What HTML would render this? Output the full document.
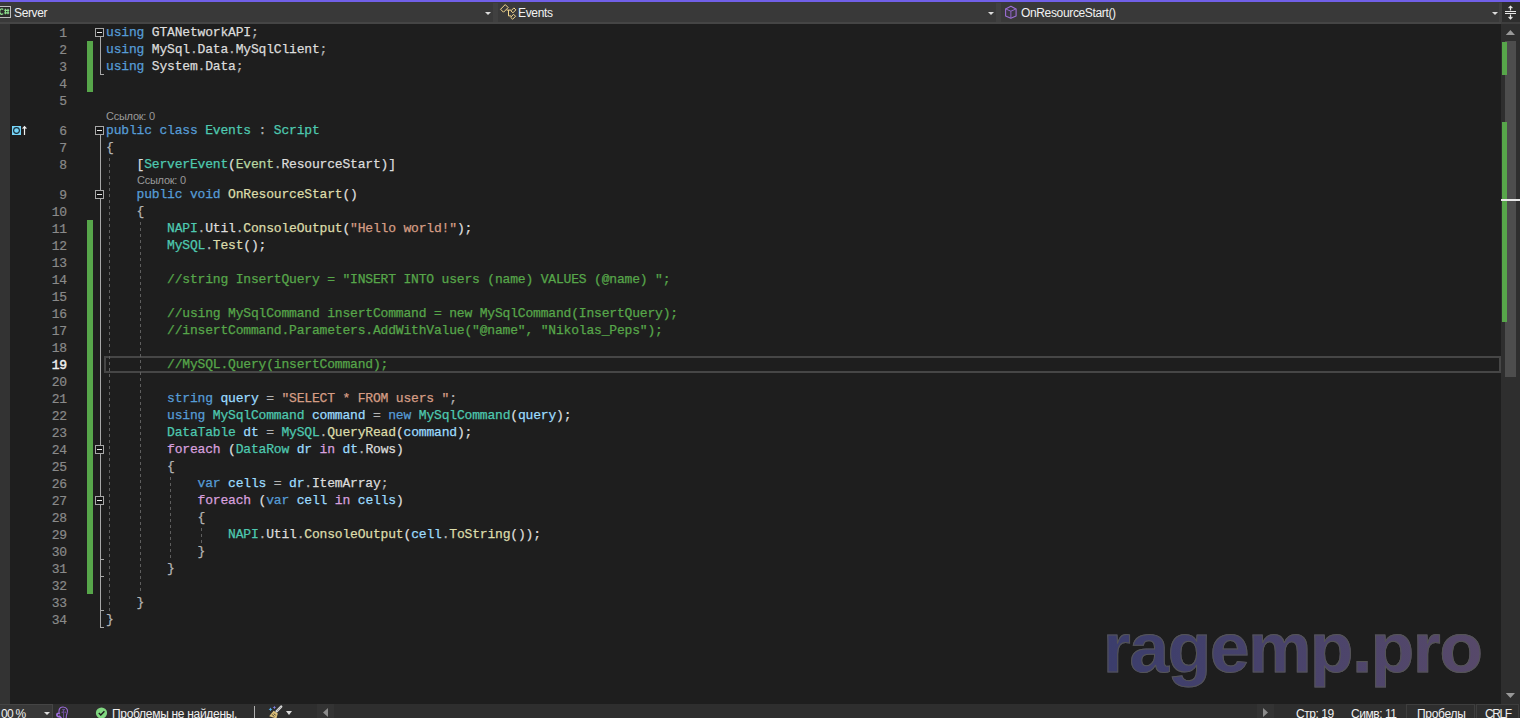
<!DOCTYPE html>
<html><head><meta charset="utf-8">
<style>
html,body{margin:0;padding:0}
body{width:1520px;height:718px;overflow:hidden;background:#1e1e1e;position:relative;font-family:"Liberation Sans",sans-serif}
.a{position:absolute}
svg{position:absolute;overflow:visible}
#topline{left:0;top:0;width:1520px;height:2px;background:#7160e8}
#nav{left:0;top:2px;width:1520px;height:20px;background:#393939}
#navb{left:0;top:22px;width:1520px;height:2px;background:#454545}
.sep{top:3px;width:5px;height:19px;background:#404040}
.navt{top:6px;font-size:12px;color:#f2f2f2;line-height:15px;white-space:nowrap;letter-spacing:-0.35px}
.dd{position:absolute;width:0;height:0;border-left:3px solid transparent;border-right:3px solid transparent;border-top:3px solid #dcdcdc}
#leftstrip{left:0;top:24px;width:10px;height:680px;background:#333333}
.ln{position:absolute;left:27px;width:40px;text-align:right;font-family:"Liberation Mono",monospace;font-size:13px;letter-spacing:-0.175px;line-height:17px;color:#8a8a8a;padding-top:1px;-webkit-text-stroke:0.2px currentColor}
.ln.cur{color:#f0f0f0;-webkit-text-stroke:0.45px currentColor}
.cl{position:absolute;left:106px;white-space:pre;font-family:"Liberation Mono",monospace;font-size:13px;letter-spacing:-0.175px;line-height:17px;-webkit-text-stroke:0.25px currentColor}
.lens{position:absolute;font-size:11px;color:#9a9a9a;line-height:13px;white-space:nowrap;letter-spacing:-0.25px}
.ig{position:absolute;width:1px;background:repeating-linear-gradient(to bottom,#5e5e5e 0,#5e5e5e 3px,transparent 3px,transparent 6px)}
.cb{position:absolute;left:95px;width:7px;height:7px;border:1px solid #a8a8a8;background:#161616}
.cb i{position:absolute;left:1px;top:3px;width:5px;height:1px;background:#e8e8e8}
.tk{position:absolute;left:100px;width:4px;height:1px;background:#a8a8a8}
.gb{position:absolute;left:87px;width:6px;background:#57a64a}
#curline{left:104px;top:356px;width:1393px;height:13px;border:2px solid #464646}
#vscroll{left:1501px;top:24px;width:19px;height:680px;background:#2e2e2e}
#thumb{left:1505px;top:41px;width:11px;height:336px;background:#4d4d4d}
#status{left:0;top:704px;width:1520px;height:14px;background:#2e2e2e}
.st{position:absolute;top:707px;font-size:12px;color:#f0f0f0;line-height:15px;white-space:nowrap;letter-spacing:-0.3px}
#wm{left:1103px;top:606px;font-family:"Liberation Sans",sans-serif;font-weight:bold;font-size:71px;line-height:84px;letter-spacing:-1.2px;white-space:nowrap;background:linear-gradient(to right,#3b3d6c,#57496a);-webkit-background-clip:text;background-clip:text;color:transparent;-webkit-text-stroke:1px #555}
</style></head><body>
<div id="topline" class="a"></div>
<div id="nav" class="a"></div>
<div id="navb" class="a"></div>
<!-- nav combos -->
<div class="a" style="left:0;top:6px;width:11px;height:12px;border:1px solid #bdbdbd;box-sizing:border-box;border-left:none;background:#2c2c2c"></div>
<svg style="left:0;top:0" width="12" height="24" viewBox="0 0 12 24">
 <path d="M3.2 9.5 C2.2 8.4 -0.3 8.7 -0.3 11.6 C-0.3 14.5 2.2 14.8 3.2 13.7" fill="none" stroke="#8ee08e" stroke-width="1.2"/>
 <path d="M5.4 8.8V14.3M8 8.8V14.3M4.3 10.3H9.2M4.3 12.8H9.2" stroke="#8ee08e" stroke-width="1.15"/>
</svg>
<div class="a navt" style="left:14px">Server</div>
<div class="dd" style="left:485px;top:12px"></div>
<div class="a sep" style="left:493px"></div>
<svg style="left:498px;top:2px" width="20" height="20" viewBox="0 0 20 20">
 <g fill="none" stroke="#f5d88e" stroke-width="1" stroke-linejoin="miter">
 <path d="M10.17 5.55 L7.21 2.59 L2.55 7.25 L5.51 10.21 Z"/>
 <path d="M14.91 10.83 L12.93 8.85 L15.89 5.89 L17.87 7.87 Z"/>
 <path d="M14.61 17.23 L12.63 15.25 L15.59 12.29 L17.57 14.27 Z"/>
 <path d="M8.6 8.1 H12.9 M10.5 8.1 V13.9 H13.0"/>
 </g>
</svg>
<div class="a navt" style="left:518px">Events</div>
<div class="dd" style="left:988px;top:12px"></div>
<div class="a sep" style="left:996px"></div>
<svg style="left:1000px;top:2px" width="22" height="20" viewBox="0 0 22 20">
 <path d="M10.86 4.2 L16.1 6.9 V14 L10.86 16.2 L5.6 14 V6.9 Z" fill="#3c3742" stroke="#9d6fd6" stroke-width="1.1" stroke-linejoin="round"/>
 <path d="M5.6 6.9 L10.86 9.2 L16.1 6.9 M10.86 9.2 V16.2" fill="none" stroke="#9068c8" stroke-width="1"/>
</svg>
<div class="a navt" style="left:1021px">OnResourceStart()</div>
<div class="dd" style="left:1492px;top:12px"></div>
<div class="a" style="left:1499px;top:3px;width:3px;height:19px;background:#404040"></div>
<div class="a" style="left:1502px;top:2px;width:18px;height:20px;background:#2d2d2d"></div>
<div class="a" style="left:1501px;top:22px;width:19px;height:2px;background:#3e3e3e"></div>
<svg style="left:1500px;top:2px" width="20" height="22" viewBox="0 0 20 22">
 <g stroke="#e6e6e6" stroke-width="1.2" fill="none">
 <path d="M5 9.5H16M5 11.5H16"/>
 <path d="M10.5 4.3V8.6M8.6 6.2L10.5 4.3L12.4 6.2"/>
 <path d="M10.5 12.4V16.8M8.6 14.9L10.5 16.8L12.4 14.9"/>
 </g>
</svg>

<div id="leftstrip" class="a"></div>
<div id="curline" class="a"></div>
<div class="gb" style="top:41px;height:51px"></div>
<div class="gb" style="top:220px;height:374px"></div>
<div class="ig" style="left:109px;top:158px;height:453px"></div>
<div class="ig" style="left:140px;top:222px;height:372px"></div>
<div class="ig" style="left:170px;top:477px;height:83px"></div>
<div class="ig" style="left:201px;top:528px;height:15px"></div>
<div class="a" style="left:100px;width:1px;background:#a8a8a8;top:37px;height:37px"></div>
<div class="a" style="left:100px;width:1px;background:#a8a8a8;top:135px;height:492px"></div>
<div class="cb" style="top:28px"><i></i></div>
<div class="cb" style="top:126px"><i></i></div>
<div class="cb" style="top:190px"><i></i></div>
<div class="cb" style="top:445px"><i></i></div>
<div class="cb" style="top:496px"><i></i></div>
<div class="tk" style="top:74px"></div>
<div class="tk" style="top:559px"></div>
<div class="tk" style="top:576px"></div>
<div class="tk" style="top:610px"></div>
<div class="tk" style="top:627px"></div>
<svg style="left:10px;top:122px" width="20" height="17" viewBox="0 0 20 17">
 <rect x="2" y="4" width="9" height="9" fill="#75d4f8"/>
 <circle cx="6.5" cy="8.5" r="2.9" fill="none" stroke="#1a2a33" stroke-width="1.1"/>
 <path d="M14.5 13V4.6M12.6 6.6L14.5 4.6L16.4 6.6" stroke="#f0f0f0" stroke-width="1.2" fill="none"/>
</svg>
<div class="lens" style="left:106px;top:110px">Ссылок: 0</div>
<div class="lens" style="left:137px;top:174px">Ссылок: 0</div>
<div class="ln" style="top:24px">1</div>
<div class="cl" style="top:24px"><span style="color:#569CD6">using</span><span style="color:#DCDCDC"> GTANetworkAPI</span><span style="color:#B4B4B4">;</span></div>
<div class="ln" style="top:41px">2</div>
<div class="cl" style="top:41px"><span style="color:#569CD6">using</span><span style="color:#DCDCDC"> MySql</span><span style="color:#B4B4B4">.</span><span style="color:#DCDCDC">Data</span><span style="color:#B4B4B4">.</span><span style="color:#DCDCDC">MySqlClient</span><span style="color:#B4B4B4">;</span></div>
<div class="ln" style="top:58px">3</div>
<div class="cl" style="top:58px"><span style="color:#569CD6">using</span><span style="color:#DCDCDC"> System</span><span style="color:#B4B4B4">.</span><span style="color:#DCDCDC">Data</span><span style="color:#B4B4B4">;</span></div>
<div class="ln" style="top:75px">4</div>
<div class="ln" style="top:92px">5</div>
<div class="ln" style="top:122px">6</div>
<div class="cl" style="top:122px"><span style="color:#569CD6">public class</span><span style="color:#DCDCDC"> </span><span style="color:#4EC9B0">Events</span><span style="color:#B4B4B4"> : </span><span style="color:#4EC9B0">Script</span></div>
<div class="ln" style="top:139px">7</div>
<div class="cl" style="top:139px"><span style="color:#B4B4B4">{</span></div>
<div class="ln" style="top:156px">8</div>
<div class="cl" style="top:156px"><span style="color:#DCDCDC">    [</span><span style="color:#4EC9B0">ServerEvent</span><span style="color:#DCDCDC">(</span><span style="color:#B8D7A3">Event</span><span style="color:#B4B4B4">.</span><span style="color:#DCDCDC">ResourceStart</span><span style="color:#DCDCDC">)]</span></div>
<div class="ln" style="top:186px">9</div>
<div class="cl" style="top:186px"><span style="color:#569CD6">    public void</span><span style="color:#DCDCDC"> </span><span style="color:#DCDCAA">OnResourceStart</span><span style="color:#DCDCDC">()</span></div>
<div class="ln" style="top:203px">10</div>
<div class="cl" style="top:203px"><span style="color:#B4B4B4">    {</span></div>
<div class="ln" style="top:220px">11</div>
<div class="cl" style="top:220px"><span style="color:#4EC9B0">        NAPI</span><span style="color:#B4B4B4">.</span><span style="color:#DCDCDC">Util</span><span style="color:#B4B4B4">.</span><span style="color:#DCDCAA">ConsoleOutput</span><span style="color:#DCDCDC">(</span><span style="color:#D69D85">&quot;Hello world!&quot;</span><span style="color:#DCDCDC">);</span></div>
<div class="ln" style="top:237px">12</div>
<div class="cl" style="top:237px"><span style="color:#4EC9B0">        MySQL</span><span style="color:#B4B4B4">.</span><span style="color:#DCDCAA">Test</span><span style="color:#DCDCDC">();</span></div>
<div class="ln" style="top:254px">13</div>
<div class="ln" style="top:271px">14</div>
<div class="cl" style="top:271px"><span style="color:#57A64A">        //string InsertQuery = &quot;INSERT INTO users (name) VALUES (@name) &quot;;</span></div>
<div class="ln" style="top:288px">15</div>
<div class="ln" style="top:305px">16</div>
<div class="cl" style="top:305px"><span style="color:#57A64A">        //using MySqlCommand insertCommand = new MySqlCommand(InsertQuery);</span></div>
<div class="ln" style="top:322px">17</div>
<div class="cl" style="top:322px"><span style="color:#57A64A">        //insertCommand.Parameters.AddWithValue(&quot;@name&quot;, &quot;Nikolas_Peps&quot;);</span></div>
<div class="ln" style="top:339px">18</div>
<div class="ln cur" style="top:356px">19</div>
<div class="cl" style="top:356px"><span style="color:#57A64A">        //MySQL.Query(insertCommand);</span></div>
<div class="ln" style="top:373px">20</div>
<div class="ln" style="top:390px">21</div>
<div class="cl" style="top:390px"><span style="color:#569CD6">        string</span><span style="color:#DCDCDC"> </span><span style="color:#9CDCFE">query</span><span style="color:#B4B4B4"> = </span><span style="color:#D69D85">&quot;SELECT * FROM users &quot;</span><span style="color:#B4B4B4">;</span></div>
<div class="ln" style="top:407px">22</div>
<div class="cl" style="top:407px"><span style="color:#569CD6">        using</span><span style="color:#DCDCDC"> </span><span style="color:#4EC9B0">MySqlCommand</span><span style="color:#DCDCDC"> </span><span style="color:#9CDCFE">command</span><span style="color:#B4B4B4"> = </span><span style="color:#569CD6">new</span><span style="color:#DCDCDC"> </span><span style="color:#4EC9B0">MySqlCommand</span><span style="color:#DCDCDC">(</span><span style="color:#9CDCFE">query</span><span style="color:#DCDCDC">);</span></div>
<div class="ln" style="top:424px">23</div>
<div class="cl" style="top:424px"><span style="color:#4EC9B0">        DataTable</span><span style="color:#DCDCDC"> </span><span style="color:#9CDCFE">dt</span><span style="color:#B4B4B4"> = </span><span style="color:#4EC9B0">MySQL</span><span style="color:#B4B4B4">.</span><span style="color:#DCDCAA">QueryRead</span><span style="color:#DCDCDC">(</span><span style="color:#9CDCFE">command</span><span style="color:#DCDCDC">);</span></div>
<div class="ln" style="top:441px">24</div>
<div class="cl" style="top:441px"><span style="color:#D8A0DF">        foreach</span><span style="color:#DCDCDC"> (</span><span style="color:#4EC9B0">DataRow</span><span style="color:#DCDCDC"> </span><span style="color:#9CDCFE">dr</span><span style="color:#DCDCDC"> </span><span style="color:#D8A0DF">in</span><span style="color:#DCDCDC"> </span><span style="color:#9CDCFE">dt</span><span style="color:#B4B4B4">.</span><span style="color:#DCDCDC">Rows)</span></div>
<div class="ln" style="top:458px">25</div>
<div class="cl" style="top:458px"><span style="color:#B4B4B4">        {</span></div>
<div class="ln" style="top:475px">26</div>
<div class="cl" style="top:475px"><span style="color:#569CD6">            var</span><span style="color:#DCDCDC"> </span><span style="color:#9CDCFE">cells</span><span style="color:#B4B4B4"> = </span><span style="color:#9CDCFE">dr</span><span style="color:#B4B4B4">.</span><span style="color:#DCDCDC">ItemArray</span><span style="color:#B4B4B4">;</span></div>
<div class="ln" style="top:492px">27</div>
<div class="cl" style="top:492px"><span style="color:#D8A0DF">            foreach</span><span style="color:#DCDCDC"> (</span><span style="color:#569CD6">var</span><span style="color:#DCDCDC"> </span><span style="color:#9CDCFE">cell</span><span style="color:#DCDCDC"> </span><span style="color:#D8A0DF">in</span><span style="color:#DCDCDC"> </span><span style="color:#9CDCFE">cells</span><span style="color:#DCDCDC">)</span></div>
<div class="ln" style="top:509px">28</div>
<div class="cl" style="top:509px"><span style="color:#B4B4B4">            {</span></div>
<div class="ln" style="top:526px">29</div>
<div class="cl" style="top:526px"><span style="color:#4EC9B0">                NAPI</span><span style="color:#B4B4B4">.</span><span style="color:#DCDCDC">Util</span><span style="color:#B4B4B4">.</span><span style="color:#DCDCAA">ConsoleOutput</span><span style="color:#DCDCDC">(</span><span style="color:#9CDCFE">cell</span><span style="color:#B4B4B4">.</span><span style="color:#DCDCAA">ToString</span><span style="color:#DCDCDC">());</span></div>
<div class="ln" style="top:543px">30</div>
<div class="cl" style="top:543px"><span style="color:#B4B4B4">            }</span></div>
<div class="ln" style="top:560px">31</div>
<div class="cl" style="top:560px"><span style="color:#B4B4B4">        }</span></div>
<div class="ln" style="top:577px">32</div>
<div class="ln" style="top:594px">33</div>
<div class="cl" style="top:594px"><span style="color:#B4B4B4">    }</span></div>
<div class="ln" style="top:611px">34</div>
<div class="cl" style="top:611px"><span style="color:#B4B4B4">}</span></div>

<div id="wm" class="a">ragemp.pro</div>

<div id="vscroll" class="a"></div>
<div id="thumb" class="a"></div>
<div class="a" style="left:1502px;top:42px;width:5px;height:33px;background:#57a64a"></div>
<div class="a" style="left:1502px;top:122px;width:5px;height:200px;background:#57a64a"></div>
<div class="a" style="left:1501px;top:199px;width:19px;height:2px;background:#e8e8e8"></div>
<svg style="left:1500px;top:24px" width="20" height="680" viewBox="0 0 20 680">
 <path d="M5.8 11H15L10.4 6Z" fill="#999"/>
 <path d="M5.8 669H15L10.4 674Z" fill="#999"/>
</svg>

<div id="status" class="a"></div>
<div class="a" style="left:0;top:704px;width:53px;height:14px;background:#383838;border-top:1px solid #454545;border-right:1px solid #454545;box-sizing:border-box"></div>
<div class="st" style="left:1px;letter-spacing:-0.7px">00 %</div>
<div class="dd" style="left:44px;top:712px"></div>
<svg style="left:54px;top:704px" width="16" height="14" viewBox="0 0 16 14">
 <path d="M5.8 10.2 C4.2 8 4.6 3 9 3 C13.2 3 14.3 6.9 13 9.4 C12.4 10.5 12.2 11.6 12.2 14" fill="none" stroke="#9a6ad6" stroke-width="1.1"/>
 <path d="M8.2 5.6 H11 M9.6 5.6 V14" fill="none" stroke="#6f4fa3" stroke-width="1"/>
 <circle cx="8.2" cy="8.2" r="0.6" fill="#9a6ad6"/><circle cx="11.2" cy="8.2" r="0.6" fill="#9a6ad6"/>
 <path d="M5 9.3 A1.7 1.7 0 1 0 5.5 12.4 L7.8 14.8" fill="none" stroke="#a070e0" stroke-width="1.7"/>
</svg>
<svg style="left:95px;top:704px" width="14" height="14" viewBox="0 0 14 14">
 <circle cx="6.5" cy="9" r="5.6" fill="#80d780"/>
 <path d="M3.8 9 L5.8 11 L9.4 7.2" fill="none" stroke="#1b1b1b" stroke-width="1.4"/>
</svg>
<div class="st" style="left:112px">Проблемы не найдены.</div>
<div class="a" style="left:254px;top:706px;width:1px;height:12px;background:#b0b0b0"></div>
<svg style="left:268px;top:704px" width="16" height="14" viewBox="0 0 16 14">
 <path d="M2.5 3.4 Q2.8 5 4.4 5.3 Q2.8 5.6 2.5 7.2 Q2.2 5.6 0.6 5.3 Q2.2 5 2.5 3.4Z" fill="#4fb0f5"/>
 <path d="M6.4 1.7 Q6.7 3.2 8.2 3.5 Q6.7 3.8 6.4 5.3 Q6.1 3.8 4.6 3.5 Q6.1 3.2 6.4 1.7Z" fill="#7f7ee0"/>
 <path d="M13.2 2.6 L8.6 7.4" stroke="#d6d6d6" stroke-width="2.4" stroke-linecap="round"/>
 <path d="M12.4 3.6 L9.4 6.6" stroke="#444" stroke-width="0.8" stroke-dasharray="0.8 1"/>
 <path d="M5.6 6.8 L9.8 9.4 L8.4 14.5 L1.2 12.2 Z" fill="#dcc07a"/>
 <path d="M4.2 10.4 L6.2 12.6 M6 9.6 L7.6 11.4" stroke="#3a3528" stroke-width="1"/>
</svg>
<div class="dd" style="left:286px;top:711px;border-left-width:3.5px;border-right-width:3.5px;border-top-width:4px"></div>
<div class="a" style="left:317px;top:704px;width:17px;height:14px;background:#333333"></div>
<svg style="left:317px;top:704px" width="17" height="14" viewBox="0 0 17 14"><path d="M11 4 V13 L6 8.5Z" fill="#8c8c8c"/></svg>
<div class="a" style="left:1257px;top:704px;width:17px;height:14px;background:#333333"></div>
<svg style="left:1257px;top:704px" width="17" height="14" viewBox="0 0 17 14"><path d="M6 4 V13 L11 8.5Z" fill="#8c8c8c"/></svg>
<div class="st" style="left:1296px;letter-spacing:-0.45px">Стр: 19</div>
<div class="st" style="left:1351px;letter-spacing:-0.45px">Симв: 11</div>
<div class="a" style="left:1406px;top:704px;width:69px;height:14px;border:1px solid #3e3e3e;border-bottom:none;box-sizing:border-box"></div>
<div class="st" style="left:1417px">Пробелы</div>
<div class="a" style="left:1476px;top:704px;width:43px;height:14px;border:1px solid #3e3e3e;border-bottom:none;box-sizing:border-box"></div>
<div class="st" style="left:1485px;letter-spacing:-1.4px">CRLF</div>
</body></html>
